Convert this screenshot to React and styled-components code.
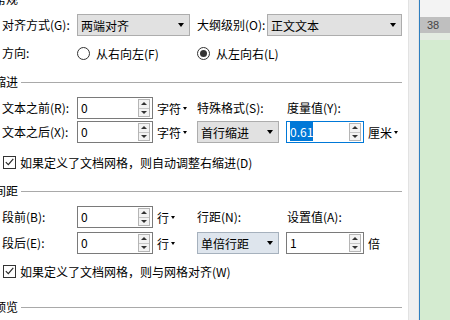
import React from "react";
import styled, { createGlobalStyle } from "styled-components";

const GlobalStyle = createGlobalStyle`
  html, body {
    margin: 0;
    padding: 0;
  }
  body {
    width: 450px;
    height: 320px;
    overflow: hidden;
    background: #fff;
    font-family: "Noto Sans CJK SC", "Microsoft YaHei", sans-serif;
    font-size: 12px;
    color: #000;
  }
`;

const Screen = styled.div`
  display: flex;
  height: 320px;
`;

const Dialog = styled.div`
  width: 408px;
  flex: none;
  box-sizing: border-box;
  padding: 0 6px 0 2px;
  background: #fff;
  overflow: hidden;
`;

const Form = styled.div`
  display: flex;
  flex-direction: column;
`;

const Gutter = styled.div`
  width: 11px;
  flex: none;
  box-sizing: border-box;
  background: #f0f0f0;
  border-left: 1px solid #e2e2e2;
  border-right: 1px solid #e6e6e6;
`;

const BlueLine = styled.div`
  width: 1px;
  flex: none;
  background: #2f7fc0;
`;

const DocArea = styled.div`
  flex: 1;
  display: flex;
  flex-direction: column;
`;

const DocTop = styled.div`
  height: 17px;
  background: #f3f3f3;
`;

const Ruler = styled.div`
  height: 16px;
  background: #bfbfbf;
  padding-left: 7px;
  font-family: "Liberation Sans", sans-serif;
  font-size: 11px;
  line-height: 16px;
  color: #444;
`;

const DocGap = styled.div`
  height: 7px;
  background: #e3ebe1;
`;

const DocPage = styled.div`
  flex: 1;
  background: #d4ebd0;
`;

const Heading = styled.div`
  display: flex;
  align-items: center;
  height: 14px;
  margin-top: ${(p) => p.$mt}px;
  margin-left: -8px;
  white-space: nowrap;
  span {
    line-height: 14px;
  }
  &::after {
    content: "";
    flex: 1;
    height: 1px;
    background: #a9a9a9;
    margin-left: 3px;
  }
`;

const Row = styled.div`
  display: flex;
  align-items: center;
  height: 22px;
  margin-top: ${(p) => p.$mt}px;
  white-space: nowrap;
`;

const Label = styled.span`
  flex: none;
  width: ${(p) => p.$w}px;
  margin-left: ${(p) => p.$ml || 0}px;
  line-height: 22px;
`;

const Select = styled.div`
  flex: none;
  width: ${(p) => p.$w}px;
  height: 22px;
  margin-left: ${(p) => p.$ml || 0}px;
  box-sizing: border-box;
  border: 1px solid ${(p) => (p.$hover ? "#a6b1bd" : "#adadad")};
  background: ${(p) => (p.$hover ? "#dee5ed" : "#e1e1e1")};
  display: flex;
  align-items: center;
  justify-content: space-between;
  padding: 0 5px 0 3px;
  &::after {
    content: "";
    border-left: 3.5px solid transparent;
    border-right: 3.5px solid transparent;
    border-top: 4px solid #000;
  }
`;

const SpinBox = styled.div`
  flex: none;
  width: ${(p) => p.$w}px;
  height: 22px;
  margin-left: ${(p) => p.$ml || 0}px;
  box-sizing: border-box;
  border: 1px solid ${(p) => (p.$focus ? "#0078d7" : "#7a7a7a")};
  background: #fff;
  display: flex;
  padding: 1px 2px 1px 2px;
`;

const SpinValue = styled.div`
  flex: 1;
  padding-left: 1px;
  line-height: 18px;
  mark {
    background: #0078d7;
    color: #fff;
    padding: 1px 0;
  }
`;

const Stepper = styled.div`
  width: 12px;
  display: flex;
  flex-direction: column;
  box-sizing: border-box;
  border: 1px solid #b5b5b5;
  background: #f3f3f3;
`;

const Step = styled.div`
  flex: 1;
  display: flex;
  align-items: center;
  justify-content: center;
  & + & {
    border-top: 1px solid #c6c6c6;
  }
  &::after {
    content: "";
    border-left: 3px solid transparent;
    border-right: 3px solid transparent;
    ${(p) =>
      p.$down ? "border-top: 3px solid #333;" : "border-bottom: 3px solid #333;"}
  }
`;

const Unit = styled.span`
  flex: none;
  width: ${(p) => p.$w}px;
  margin-left: 4px;
  display: flex;
  align-items: center;
  ${(p) =>
    p.$caret &&
    `&::after {
      content: "";
      margin-left: 2px;
      border-left: 2.5px solid transparent;
      border-right: 2.5px solid transparent;
      border-top: 3px solid #000;
    }`}
`;

const RadioOption = styled.label`
  flex: none;
  width: ${(p) => p.$w}px;
  display: flex;
  align-items: center;
  gap: 6px;
`;

const RadioDot = styled.span`
  width: 13px;
  height: 13px;
  box-sizing: border-box;
  border: 1px solid #333;
  border-radius: 50%;
  display: flex;
  align-items: center;
  justify-content: center;
  &::after {
    content: "";
    width: 7px;
    height: 7px;
    border-radius: 50%;
    background: ${(p) => (p.$on ? "#333" : "transparent")};
  }
`;

const CheckRow = styled.label`
  display: flex;
  align-items: center;
  height: 16px;
  margin-top: ${(p) => p.$mt}px;
  padding-left: 1px;
  gap: 4px;
  white-space: nowrap;
`;

const CheckBox = styled.span`
  width: 13px;
  height: 13px;
  box-sizing: border-box;
  border: 1px solid #333;
  display: flex;
  align-items: center;
  justify-content: center;
`;

const Spin = ({ value, w = 76, ml, focus }) => (
  <SpinBox $w={w} $ml={ml} $focus={focus}>
    <SpinValue>{focus ? <mark>{value}</mark> : value}</SpinValue>
    <Stepper>
      <Step />
      <Step $down />
    </Stepper>
  </SpinBox>
);

const Check = ({ text, mt }) => (
  <CheckRow $mt={mt}>
    <CheckBox>
      <svg width="9" height="8" viewBox="0 0 9 8">
        <path d="M0.8 4.2 L3.3 6.7 L8.3 0.8" fill="none" stroke="#222" strokeWidth="1.1" />
      </svg>
    </CheckBox>
    {text}
  </CheckRow>
);

const App = () => {
  return (
    <>
      <GlobalStyle />
      <Screen>
        <Dialog>
          <Form>
            <Heading $mt={-8}>
              <span>常规</span>
            </Heading>
            <Row $mt={8}>
              <Label $w={75}>对齐方式(G):</Label>
              <Select $w={113}>两端对齐</Select>
              <Label $w={70} $ml={7}>大纲级别(O):</Label>
              <Select $w={135}>正文文本</Select>
            </Row>
            <Row $mt={6}>
              <Label $w={75}>方向:</Label>
              <RadioOption $w={120}>
                <RadioDot />
                从右向左(F)
              </RadioOption>
              <RadioOption $w={100}>
                <RadioDot $on />
                从左向右(L)
              </RadioOption>
            </Row>

            <Heading $mt={11}>
              <span>缩进</span>
            </Heading>
            <Row $mt={8}>
              <Label $w={75}>文本之前(R):</Label>
              <Spin value="0" />
              <Unit $w={40} $caret>字符</Unit>
              <Label $w={90}>特殊格式(S):</Label>
              <Label $w={80}>度量值(Y):</Label>
            </Row>
            <Row $mt={2}>
              <Label $w={75}>文本之后(X):</Label>
              <Spin value="0" />
              <Unit $w={40} $caret>字符</Unit>
              <Select $w={82}>首行缩进</Select>
              <Spin value="0.61" w={78} ml={7} focus />
              <Unit $w={34} $caret>厘米</Unit>
            </Row>
            <Check mt={11} text="如果定义了文档网格，则自动调整右缩进(D)" />

            <Heading $mt={14}>
              <span>间距</span>
            </Heading>
            <Row $mt={8}>
              <Label $w={75}>段前(B):</Label>
              <Spin value="0" />
              <Unit $w={40} $caret>行</Unit>
              <Label $w={90}>行距(N):</Label>
              <Label $w={80}>设置值(A):</Label>
            </Row>
            <Row $mt={4}>
              <Label $w={75}>段后(E):</Label>
              <Spin value="0" />
              <Unit $w={40} $caret>行</Unit>
              <Select $w={82} $hover>单倍行距</Select>
              <Spin value="1" w={78} ml={7} />
              <Unit $w={20}>倍</Unit>
            </Row>
            <Check mt={9} text="如果定义了文档网格，则与网格对齐(W)" />

            <Heading $mt={21}>
              <span>预览</span>
            </Heading>
          </Form>
        </Dialog>
        <Gutter />
        <BlueLine />
        <DocArea>
          <DocTop />
          <Ruler>38</Ruler>
          <DocGap />
          <DocPage />
        </DocArea>
      </Screen>
    </>
  );
};

export default App;
